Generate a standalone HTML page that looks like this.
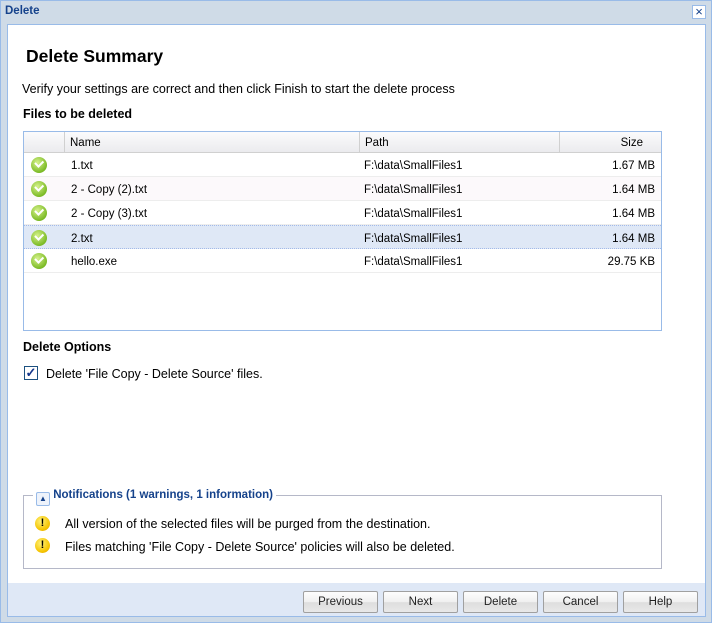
<!DOCTYPE html>
<html><head><style>
*{margin:0;padding:0;box-sizing:border-box}
body{width:712px;height:623px;background:#cfdbe7;font-family:"Liberation Sans",sans-serif;font-size:11.5px;color:#000;position:relative;overflow:hidden}
.abs{position:absolute}
.win{left:0;top:0;width:712px;height:623px;border:1px solid #99bbe8;background:#cfdbe7}
.title{left:5px;top:5px;font-weight:bold;color:#15428b;font-size:11.5px}
.close{left:692px;top:5px;width:14px;height:14px;border:1px solid #99bbe8;background:#fff;color:#15428b;font-size:13px;line-height:11px;text-align:center}
.body{left:7px;top:24px;width:699px;height:560px;background:#fff;border:1px solid #99bbe8;border-bottom:none}
.foot{left:7px;top:583px;width:699px;height:34px;background:#dfe8f6;border:1px solid #99bbe8;border-top:none}
.grid{left:23px;top:131px;width:639px;height:200px;border:1px solid #99bbe8;background:#fff}
.hdr{position:absolute;left:0;top:0;width:637px;height:21px;background:linear-gradient(#fbfbfc,#ebebee);border-bottom:1px solid #d0d0d0}
.hc{position:absolute;top:0;height:21px;line-height:23px;border-right:1px solid #d0d0d0;padding-left:5px;color:#000}
.row{position:absolute;left:0;width:637px;height:24px;border-bottom:1px solid #ededed;line-height:26px}
.row span{position:absolute;top:0}
.ok{position:absolute;left:7px;top:4px;width:16px;height:16px;border-radius:50%;background:radial-gradient(circle at 40% 35%,#d6f28c,#7cbb26 70%,#5c9a18);}
.ok:after{content:"";position:absolute;left:4px;top:3px;width:6px;height:3.5px;border-left:2px solid #fff;border-bottom:2px solid #fff;transform:rotate(-45deg)}
.btn{position:absolute;top:591px;height:22px;width:75px;border:1px solid #a0a0a0;border-radius:2px;background:linear-gradient(#fdfdfd 0,#f0f0f0 50%,#dedede 52%,#e8e8e8);text-align:center;line-height:21px;color:#222;font-size:11.5px}
.warn{position:absolute;left:35px;width:15px;height:15px;border-radius:50%;background:radial-gradient(circle at 40% 35%,#fff27a,#f5c400 65%,#d89400);color:#000;font-weight:bold;font-size:11px;text-align:center;line-height:15px}
</style></head><body>
<div class="abs win"></div>
<div class="abs title">Delete</div>
<div class="abs close">×</div>
<div class="abs body"></div>
<div class="abs foot"></div>
<div class="abs" style="left:26px;top:46px;font-size:17.5px;font-weight:bold">Delete Summary</div>
<div class="abs" style="left:22px;top:82px;font-size:12.5px">Verify your settings are correct and then click Finish to start the delete process</div>
<div class="abs" style="left:23px;top:107px;font-size:12.5px;font-weight:bold">Files to be deleted</div>
<div class="abs grid">
<div class="hdr">
<div class="hc" style="left:0;width:41px"></div>
<div class="hc" style="left:41px;width:295px">Name</div>
<div class="hc" style="left:336px;width:200px">Path</div>
<div class="hc" style="left:536px;width:101px;text-align:right;padding-right:18px;border-right:none">Size</div>
</div>
<div class="row" style="top:21px"><div class="ok"></div><span style="left:47px">1.txt</span><span style="left:340px">F:\data\SmallFiles1</span><span style="right:6px">1.67 MB</span></div>
<div class="row" style="top:45px;background:#fcf9fb"><div class="ok"></div><span style="left:47px">2 - Copy (2).txt</span><span style="left:340px">F:\data\SmallFiles1</span><span style="right:6px">1.64 MB</span></div>
<div class="row" style="top:69px"><div class="ok"></div><span style="left:47px">2 - Copy (3).txt</span><span style="left:340px">F:\data\SmallFiles1</span><span style="right:6px">1.64 MB</span></div>
<div class="row" style="top:93px;background:#dfe8f6;border:1px dotted #a3bae9;border-left:none;border-right:none"><div class="ok"></div><span style="left:47px">2.txt</span><span style="left:340px">F:\data\SmallFiles1</span><span style="right:6px">1.64 MB</span></div>
<div class="row" style="top:117px"><div class="ok"></div><span style="left:47px">hello.exe</span><span style="left:340px">F:\data\SmallFiles1</span><span style="right:6px">29.75 KB</span></div>
</div>
<div class="abs" style="left:23px;top:340px;font-size:12.5px;font-weight:bold">Delete Options</div>
<div class="abs" style="left:24px;top:366px;width:14px;height:14px;border:1px solid #1c5180;background:#fff;color:#14358a;font-size:13px;line-height:12px;text-align:center;font-weight:bold">✓</div>
<div class="abs" style="left:46px;top:367px;font-size:12.5px">Delete 'File Copy - Delete Source' files.</div>
<div class="abs" style="left:23px;top:495px;width:639px;height:74px;border:1px solid #b5b8c8"></div>
<div class="abs" style="left:33px;top:487px;background:#fff;padding:0 3px 0 3px;height:16px;font-weight:bold;color:#15428b;line-height:16px;font-size:11.5px"><span style="display:inline-block;width:14px;height:14px;border:1px solid #99bbe8;border-radius:2px;background:#eef3fb;vertical-align:-3px;text-align:center;font-size:8px;line-height:12px;color:#15428b">▲</span> Notifications (1 warnings, 1 information)</div>
<div class="warn" style="top:516px">!</div>
<div class="abs" style="left:65px;top:517px;font-size:12.5px">All version of the selected files will be purged from the destination.</div>
<div class="warn" style="top:538px">!</div>
<div class="abs" style="left:65px;top:540px;font-size:12.5px">Files matching 'File Copy - Delete Source' policies will also be deleted.</div>
<div class="btn" style="left:303px">Previous</div>
<div class="btn" style="left:383px">Next</div>
<div class="btn" style="left:463px">Delete</div>
<div class="btn" style="left:543px">Cancel</div>
<div class="btn" style="left:623px">Help</div>
</body></html>
